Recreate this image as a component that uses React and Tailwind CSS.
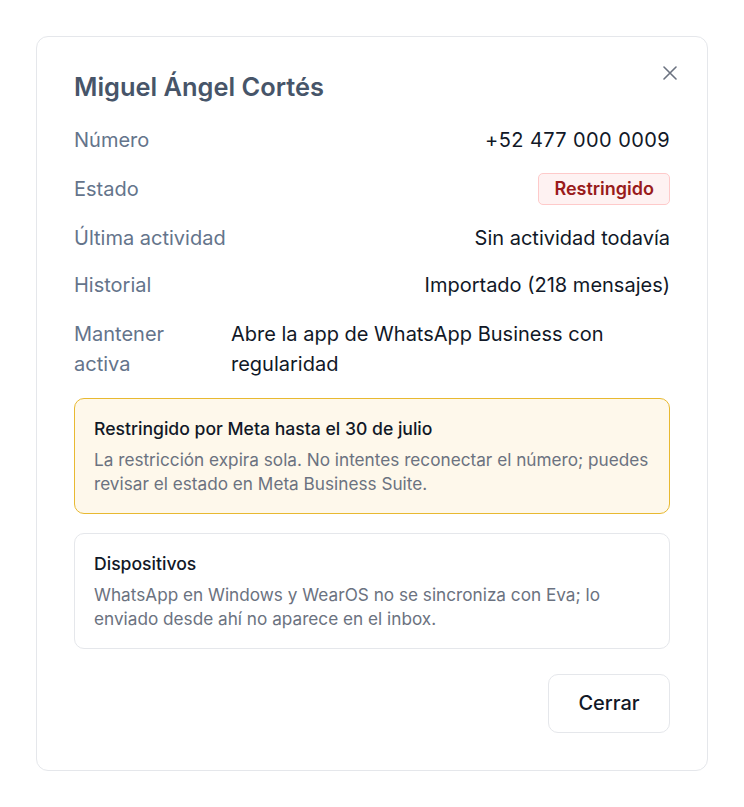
import React from "react";

function Row({ label, children, valueClass = "" }) {
  return (
    <div className="flex items-center justify-between leading-[29px]">
      <span className="text-[#64748b]">{label}</span>
      <span className={"text-[#111827] " + valueClass}>{children}</span>
    </div>
  );
}

function Note({ title, children, className }) {
  return (
    <div className={"rounded-[10px] border px-[19px] pb-[17px] pt-[18px] " + className}>
      <div className="text-[17.6px] font-medium leading-[24px] text-[#111827]">{title}</div>
      <div className="mt-[7px] text-[17.2px] leading-[24px] text-[#6b7280]">{children}</div>
    </div>
  );
}

export default function App() {
  return (
    <div
      className="min-h-screen bg-white p-9"
      style={{ fontFamily: "Inter, 'Noto Sans', sans-serif" }}
    >
      <div className="relative w-[672px] rounded-[12px] border border-[#e5e7eb] bg-white px-[37px] pb-[37px] pt-[35px] text-[20px]">
        <button className="absolute right-[30px] top-[29px] text-[#6b7280]">
          <svg width="14" height="14" viewBox="0 0 14 14" fill="none" stroke="currentColor" strokeWidth="1.6" strokeLinecap="round">
            <path d="M1 1L13 13M13 1L1 13" />
          </svg>
        </button>
        <h2 className="mb-[23.5px] text-[25.4px] font-semibold leading-[30px] text-[#475569]">
          Miguel Ángel Cortés
        </h2>
        <div className="flex flex-col gap-[19px]">
          <div className="flex flex-col gap-[18.5px]">
            <Row label="Número" valueClass="tracking-[0.4px]">+52 477 000 0009</Row>
            <div className="flex items-center justify-between leading-[29px]">
              <span className="text-[#64748b]">Estado</span>
              <span className="rounded-[5px] border border-[#fecaca] bg-[#fef2f2] px-[15px] text-[18px] font-semibold leading-[30px] text-[#991b1b]">
                Restringido
              </span>
            </div>
            <Row label="Última actividad">Sin actividad todavía</Row>
            <Row label="Historial">Importado (218 mensajes)</Row>
            <div className="flex leading-[30px]">
              <span className="w-[120px] shrink-0 text-[#64748b]">Mantener activa</span>
              <span className="ml-[37px] text-[#111827]">
                Abre la app de WhatsApp Business con regularidad
              </span>
            </div>
          </div>
          <Note title="Restringido por Meta hasta el 30 de julio" className="border-[#e8b931] bg-[#fef8eb]">
            La restricción expira sola. No intentes reconectar el número; puedes revisar el estado en Meta Business Suite.
          </Note>
          <Note title="Dispositivos" className="border-[#e5e7eb] bg-white">
            WhatsApp en Windows y WearOS no se sincroniza con Eva; lo enviado desde ahí no aparece en el inbox.
          </Note>
        </div>
        <div className="mt-[25px] flex justify-end">
          <button className="h-[59px] w-[122px] rounded-[10px] border border-[#e5e7eb] bg-white text-[20px] font-medium text-[#111827]">
            Cerrar
          </button>
        </div>
      </div>
    </div>
  );
}
